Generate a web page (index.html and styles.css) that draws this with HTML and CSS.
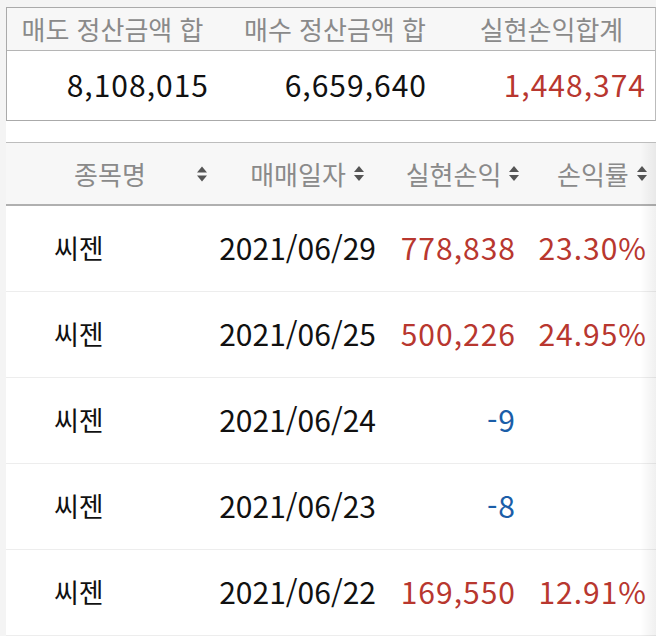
FILE: index.html
```html
<!DOCTYPE html>
<html lang="ko">
<head>
<meta charset="utf-8">
<link rel="stylesheet" href="styles.css">
</head>
<body>
<div class="page">
  <div class="summary">
    <div class="s-head">
      <div class="s-cell">매도 정산금액 합</div>
      <div class="s-cell s-cell-2">매수 정산금액 합</div>
      <div class="s-cell s-cell-3">실현손익합계</div>
    </div>
    <div class="s-body">
      <div class="s-num">8,108,015</div>
      <div class="s-num">6,659,640</div>
      <div class="s-num red">1,448,374</div>
    </div>
  </div>

  <div class="table-wrap">
    <div class="grid">
      <div class="th th-first"><span>종목명</span><i class="sort sort-abs"></i></div>
      <div class="th"><span>매매일자</span><i class="sort"></i></div>
      <div class="th"><span>실현손익</span><i class="sort"></i></div>
      <div class="th th-last"><span>손익률</span><i class="sort"></i></div>

      <div class="td name">씨젠</div>
      <div class="td num date">2021/06/29</div>
      <div class="td num red">778,838</div>
      <div class="td num red">23.30%</div>

      <div class="td name">씨젠</div>
      <div class="td num date">2021/06/25</div>
      <div class="td num red">500,226</div>
      <div class="td num red">24.95%</div>

      <div class="td name">씨젠</div>
      <div class="td num date">2021/06/24</div>
      <div class="td num blue">-9</div>
      <div class="td num"></div>

      <div class="td name">씨젠</div>
      <div class="td num date">2021/06/23</div>
      <div class="td num blue">-8</div>
      <div class="td num"></div>

      <div class="td name">씨젠</div>
      <div class="td num date">2021/06/22</div>
      <div class="td num red">169,550</div>
      <div class="td num red">12.91%</div>
    </div>
    <div class="edge-shadow"></div>
  </div>
</div>
</body>
</html>
```

FILE: styles.css
```css
html, body {
  margin: 0;
  padding: 0;
}
body {
  background: #f4f4f4;
  font-family: "Noto Sans CJK KR", sans-serif;
  width: 656px;
  height: 636px;
  overflow: hidden;
}
.page {
  margin: 7px 0 0 6px;
  background: #fff;
  height: 629px;
  overflow: hidden;
}
.summary {
  border: 1px solid #aaa;
  border-right-color: #bbb;
  width: 648px;
}
.s-head {
  display: grid;
  grid-template-columns: 211px 218px 219px;
  height: 42px;
  background: #f7f7f7;
  border-bottom: 1px solid #b5b5b5;
}
.s-cell {
  display: flex;
  align-items: center;
  justify-content: center;
  color: #8a8a8a;
  font-size: 26px;
  line-height: 1;
}
.s-cell-2 { padding-left: 16px; }
.s-cell-3 { padding-left: 12px; }
.s-body {
  display: grid;
  grid-template-columns: 211px 218px 219px;
  height: 69px;
}
.s-num {
  display: flex;
  align-items: center;
  justify-content: flex-end;
  padding: 0 9px 3px 0;
  font-size: 30px;
  line-height: 1;
  letter-spacing: 1px;
  color: #111;
}
.s-num.red { color: #b8372f; }

.table-wrap {
  position: relative;
  margin-top: 21px;
  border-top: 1px solid #bdbdbd;
}
.grid {
  display: grid;
  grid-template-columns: 208px 172px 139px 131px;
  width: 650px;
}
.th {
  position: relative;
  height: 61px;
  background: #f7f7f7;
  border-bottom: 2px solid #b0b0b0;
  display: flex;
  align-items: center;
  justify-content: center;
  padding-left: 14px;
  color: #8a8a8a;
  font-size: 26px;
  line-height: 1;
}
.th-first {
  padding-left: 0;
}
.th-last {
  justify-content: flex-start;
  padding-left: 32px;
}
.sort {
  display: inline-flex;
  flex-direction: column;
  gap: 3px;
  margin-left: 8px;
  width: 10px;
}
.sort::before,
.sort::after {
  content: "";
  display: block;
  width: 0;
  height: 0;
  border-left: 5px solid transparent;
  border-right: 5px solid transparent;
}
.sort::before { border-bottom: 6px solid #555; }
.sort::after { border-top: 6px solid #555; }
.sort-abs {
  position: absolute;
  right: 7px;
  top: 50%;
  transform: translateY(-50%);
  margin: 0;
}
.td {
  border-bottom: 1px solid #ededed;
  display: flex;
  align-items: center;
  padding-bottom: 3px;
  box-sizing: border-box;
  height: 86px;
  font-size: 30px;
  line-height: 1;
  letter-spacing: 1px;
  color: #111;
}
.td.name {
  padding-left: 48px;
  padding-bottom: 2px;
  font-size: 27px;
  letter-spacing: 0;
}
.td.num {
  justify-content: flex-end;
  padding-right: 9px;
}
.td.date {
  letter-spacing: 0;
  padding-right: 10px;
}
.td.red { color: #b8372f; }
.td.blue { color: #1b5ea8; }
.edge-shadow {
  position: absolute;
  top: 0;
  right: 0;
  width: 16px;
  height: 100%;
  background: linear-gradient(to right, rgba(0,0,0,0), rgba(0,0,0,0.06));
  pointer-events: none;
}
```
